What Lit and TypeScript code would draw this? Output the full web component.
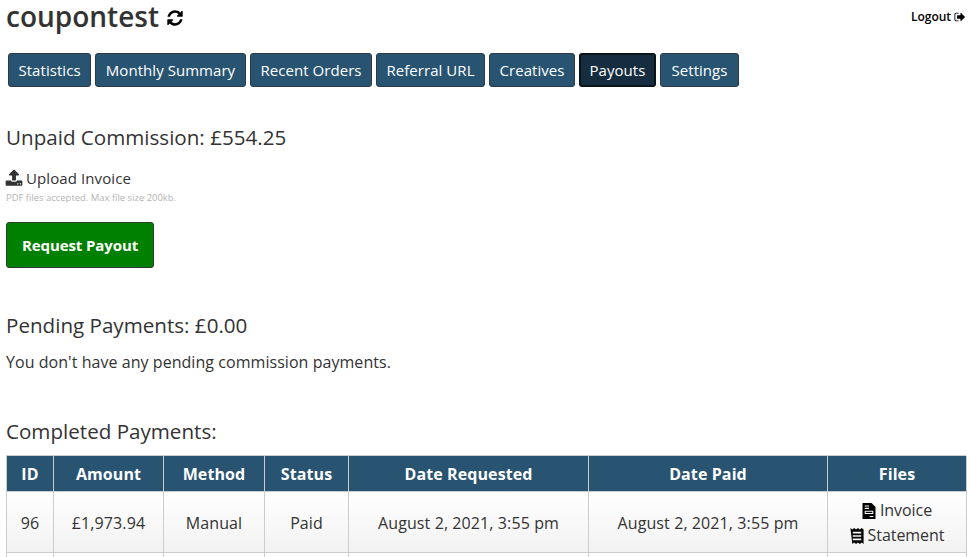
import { LitElement, html, css, svg } from "lit";
import { customElement } from "lit/decorators.js";

const REFRESH = "M1639 1056q0 5-1 7-64 268-268 434.5t-478 166.5q-146 0-282.5-55t-243.5-157l-129 129q-19 19-45 19t-45-19-19-45v-448q0-26 19-45t45-19h448q26 0 45 19t19 45-19 45l-137 137q71 66 161 102t187 36q134 0 250-65t186-179q11-17 53-117 8-23 30-23h192q13 0 22.5 9.5t9.5 22.5zm25-800v448q0 26-19 45t-45 19h-448q-26 0-45-19t-19-45 19-45l138-138q-148-137-349-137-134 0-250 65t-186 179q-11 17-53 117-8 23-30 23h-199q-13 0-22.5-9.5t-9.5-22.5v-7q65-268 270-434.5t480-166.5q146 0 284 55.500t245 156.500l130-129q19-19 45-19t45 19 19 45z";
const UPLOAD = "M1344 1472q0-26-19-45t-45-19-45 19-19 45 19 45 45 19 45-19 19-45zm256 0q0-26-19-45t-45-19-45 19-19 45 19 45 45 19 45-19 19-45zm128-224v320q0 40-28 68t-68 28h-1472q-40 0-68-28t-28-68v-320q0-40 28-68t68-28h427q21 56 70.500 92t110.500 36h256q61 0 110.500-36t70.500-92h427q40 0 68 28t28 68zm-325-648q-17 40-59 40h-256v448q0 26-19 45t-45 19h-256q-26 0-45-19t-19-45v-448h-256q-42 0-59-40-17-39 14-69l448-448q18-19 45-19t45 19l448 448q31 30 14 69z";
const SIGNOUT = "M704 1440q0 4 1 20t.5 26.500-3 23.500-10 19.500-20.500 6.500h-320q-119 0-203.500-84.500t-84.500-203.500v-704q0-119 84.500-203.500t203.500-84.500h320q13 0 22.500 9.500t9.500 22.500q0 4 1 20t.5 26.500-3 23.500-10 19.500-20.500 6.500h-320q-66 0-113 47t-47 113v704q0 66 47 113t113 47h312l11.500 1 11.500 3 8 5.500 7 9 2 13.500zm928-544q0 26-19 45l-544 544q-19 19-45 19t-45-19-19-45v-288h-448q-26 0-45-19t-19-45v-384q0-26 19-45t45-19h448v-288q0-26 19-45t45-19 45 19l544 544q19 19 19 45z";
const INVOICE = "M0 0h9l4 4v12H0zM2.200 2.400v1.200h4.300V2.400zm0 2.400v1.200h4.300V4.800zm0 2.900v3.400h8.600V7.700zm1 1h6.600v1.400H3.200zm4 4.200v1.200h3.600v-1.200z";
const RECEIPT = "M0 0l2 1.500 2-1.500 2 1.500 2-1.500 2 1.500 2-1.500 2 1.500V0v17l-2-1.500-2 1.500-2-1.500-2 1.500-2-1.500-2 1.500zM2.500 4v1.800h9V4zm0 3.600v1.800h9V7.600zm0 3.600V13h9v-1.800z";

const icon = (d: string, cls: string, vb = "0 0 1792 1792") =>
  html`<svg class=${cls} viewBox=${vb} aria-hidden="true">${svg`<path fill-rule="evenodd" d=${d}></path>`}</svg>`;

const TABS = ["Statistics", "Monthly Summary", "Recent Orders", "Referral URL", "Creatives", "Payouts", "Settings"];
const COLS = ["ID", "Amount", "Method", "Status", "Date Requested", "Date Paid", "Files"];

@customElement("app-root")
export class AppRoot extends LitElement {
  static styles = css`
    :host {
      display: block;
      height: 557px;
      overflow: hidden;
      background: #fff;
      color: #333;
      font-family: "Open Sans", "Noto Sans", sans-serif;
      font-size: 16px;
      letter-spacing: 0.1px;
    }
    .top {
      display: flex;
      justify-content: space-between;
      align-items: flex-start;
      padding: 0 4px 0 6px;
      height: 53px;
    }
    h1 {
      margin: 0;
      font-size: 28px;
      font-weight: 600;
      line-height: 32px;
      letter-spacing: 0;
      color: #333;
      display: flex;
      align-items: center;
      gap: 8px;
    }
    .refresh { width: 18px; height: 18px; fill: #000; margin: 3px 0 0 -1px; }
    .logout {
      display: flex;
      align-items: center;
      gap: 3px;
      font-size: 12px;
      font-weight: 600;
      color: #000;
      letter-spacing: -0.05px;
      margin-top: 9px;
      line-height: 16px;
    }
    .logout svg { width: 12px; height: 12px; fill: #000; }
    nav {
      display: grid;
      grid-template-columns: 83px 151px 122px 109px 86px 77px 79px;
      gap: 4px;
      padding-left: 8px;
    }
    .tab {
      box-sizing: border-box;
      height: 34px;
      display: flex;
      align-items: center;
      justify-content: center;
      background: #285472;
      border: 1px solid #2d3a45;
      border-radius: 3px;
      color: #fff;
      font-size: 15px;
      letter-spacing: 0.05px;
    }
    .tab.active { background: #162d3f; border: 2px solid #0b1419; }
    main { padding: 0 6px; }
    h2 {
      margin: 0;
      font-size: 20.6px;
      font-weight: 400;
      line-height: 28px;
      letter-spacing: 0;
      color: #333;
    }
    .unpaid { margin-top: 36px; }
    .upload {
      margin-top: 16px;
      display: flex;
      align-items: center;
      gap: 3px;
      font-size: 15px;
      letter-spacing: 0.1px;
      line-height: 22px;
      color: #333;
    }
    .upload svg { width: 18px; height: 18px; fill: #333; margin-left: -1px; }
    .hint { margin-top: 3px; font-size: 9.45px; line-height: 12px; color: #b4b4b4; letter-spacing: 0; }
    .request {
      box-sizing: border-box;
      margin-top: 18px;
      width: 148px;
      height: 46px;
      display: flex;
      align-items: center;
      justify-content: center;
      background: #008000;
      border: 1px solid #2d3a2d;
      border-radius: 3px;
      color: #fff;
      font-weight: 700;
      font-size: 15px;
      letter-spacing: -0.1px;
    }
    .pending { margin-top: 43px; }
    .none { margin-top: 12px; line-height: 22px; letter-spacing: 0.05px; }
    .completed { margin-top: 44px; }
    .grid {
      margin-top: 10px;
      display: grid;
      grid-template-columns: 47px 110px 101px 84px 240px 239px 139px;
      width: 960px;
      border-top: 1px solid #ccc;
      border-left: 1px solid #ccc;
      box-sizing: border-box;
    }
    .cell {
      box-sizing: border-box;
      border-right: 1px solid #ccc;
      border-bottom: 1px solid #ccc;
      display: flex;
      flex-direction: column;
      align-items: center;
      justify-content: center;
      text-align: center;
    }
    .head {
      height: 36px;
      background: #285472;
      color: #fff;
      font-weight: 700;
    }
    .data {
      height: 61px;
      padding-top: 2px;
      background: linear-gradient(#fff, #f2f2f2);
      color: #333;
    }
    .blank { height: 30px; background: #fff; }
    .file { display: flex; align-items: center; gap: 4px; line-height: 25px; letter-spacing: -0.05px; }
    .file svg { width: 14px; height: 16px; fill: #000; }
  `;

  render() {
    const row = ["96", "£1,973.94", "Manual", "Paid", "August 2, 2021, 3:55 pm", "August 2, 2021, 3:55 pm"];
    return html`
      <div class="top">
        <h1>coupontest ${icon(REFRESH, "refresh")}</h1>
        <div class="logout">Logout ${icon(SIGNOUT, "")}</div>
      </div>
      <nav>
        ${TABS.map((t) => html`<div class="tab ${t === "Payouts" ? "active" : ""}">${t}</div>`)}
      </nav>
      <main>
        <h2 class="unpaid">Unpaid Commission: £554.25</h2>
        <div class="upload">${icon(UPLOAD, "")} Upload Invoice</div>
        <div class="hint">PDF files accepted. Max file size 200kb.</div>
        <div class="request">Request Payout</div>
        <h2 class="pending">Pending Payments: £0.00</h2>
        <div class="none">You don't have any pending commission payments.</div>
        <h2 class="completed">Completed Payments:</h2>
        <div class="grid">
          ${COLS.map((c) => html`<div class="cell head">${c}</div>`)}
          ${row.map((c) => html`<div class="cell data">${c}</div>`)}
          <div class="cell data">
            <div class="file">${icon(INVOICE, "", "0 0 13 16")} Invoice</div>
            <div class="file">${icon(RECEIPT, "", "0 0 14 17")} Statement</div>
          </div>
          ${COLS.map(() => html`<div class="cell blank"></div>`)}
        </div>
      </main>
    `;
  }
}
